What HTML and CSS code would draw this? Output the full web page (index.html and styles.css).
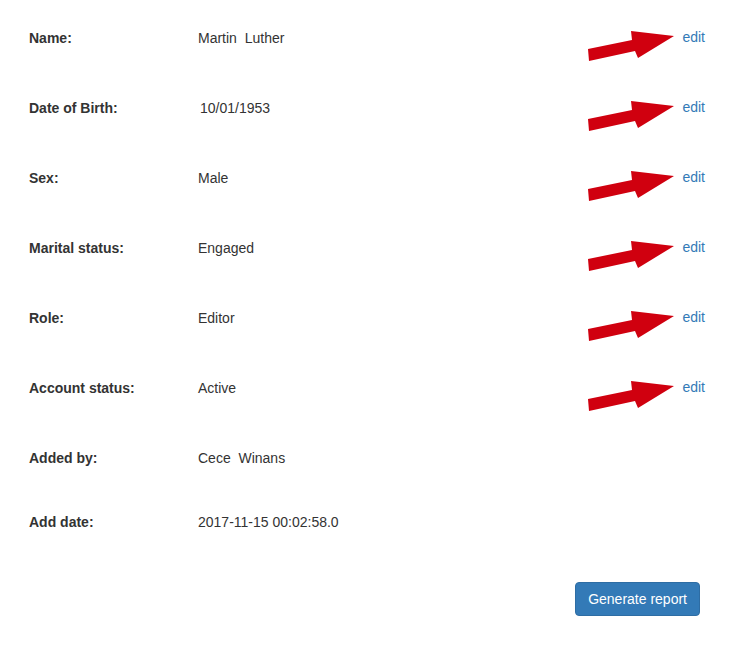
FILE: index.html
```html
<!DOCTYPE html>
<html>
<head>
<meta charset="utf-8">
<link rel="stylesheet" href="styles.css">
</head>
<body>
<div class="profile">
  <div class="row">
    <div class="label">Name:</div>
    <div class="value">Martin&nbsp; Luther</div>
    <a class="edit" href="#">edit</a>
    <svg class="arrow" viewBox="0 0 90 34" width="90" height="34"><polygon points="2,20 46,11 45,2 88,7 52,29 49,22 3,32"/></svg>
  </div>
  <div class="row">
    <div class="label">Date of Birth:</div>
    <div class="value dob">10/01/1953</div>
    <a class="edit" href="#">edit</a>
    <svg class="arrow" viewBox="0 0 90 34" width="90" height="34"><polygon points="2,20 46,11 45,2 88,7 52,29 49,22 3,32"/></svg>
  </div>
  <div class="row">
    <div class="label">Sex:</div>
    <div class="value">Male</div>
    <a class="edit" href="#">edit</a>
    <svg class="arrow" viewBox="0 0 90 34" width="90" height="34"><polygon points="2,20 46,11 45,2 88,7 52,29 49,22 3,32"/></svg>
  </div>
  <div class="row">
    <div class="label">Marital status:</div>
    <div class="value">Engaged</div>
    <a class="edit" href="#">edit</a>
    <svg class="arrow" viewBox="0 0 90 34" width="90" height="34"><polygon points="2,20 46,11 45,2 88,7 52,29 49,22 3,32"/></svg>
  </div>
  <div class="row">
    <div class="label">Role:</div>
    <div class="value">Editor</div>
    <a class="edit" href="#">edit</a>
    <svg class="arrow" viewBox="0 0 90 34" width="90" height="34"><polygon points="2,20 46,11 45,2 88,7 52,29 49,22 3,32"/></svg>
  </div>
  <div class="row">
    <div class="label">Account status:</div>
    <div class="value">Active</div>
    <a class="edit" href="#">edit</a>
    <svg class="arrow" viewBox="0 0 90 34" width="90" height="34"><polygon points="2,20 46,11 45,2 88,7 52,29 49,22 3,32"/></svg>
  </div>
  <div class="row short">
    <div class="label">Added by:</div>
    <div class="value">Cece&nbsp; Winans</div>
  </div>
  <div class="row last">
    <div class="label">Add date:</div>
    <div class="value">2017-11-15 00:02:58.0</div>
  </div>
  <div class="actions">
    <button class="btn" type="button">Generate report</button>
  </div>
</div>
</body>
</html>
```

FILE: styles.css
```css
html, body {
  margin: 0;
  padding: 0;
  background: #fff;
}
body {
  font-family: "Liberation Sans", Arial, sans-serif;
  font-size: 14px;
  line-height: 20px;
  color: #333;
}
.profile {
  padding-top: 28px;
  width: 733px;
}
.row {
  position: relative;
  display: grid;
  grid-template-columns: 169px 1fr auto;
  align-items: start;
  padding: 0 28px 0 29px;
  height: 70px;
}
.row.short {
  height: 64px;
}
.row.last {
  height: 20px;
}
.label {
  font-weight: bold;
}
.value {
  white-space: nowrap;
}
.dob {
  padding-left: 2px;
}
.edit {
  color: #337ab7;
  text-decoration: none;
  transform: translateY(-1px);
}
.arrow {
  position: absolute;
  left: 586px;
  top: 1px;
  fill: #d0000f;
}
.actions {
  display: flex;
  justify-content: flex-end;
  padding: 50px 33px 0 0;
}
.btn {
  font-family: "Liberation Sans", Arial, sans-serif;
  font-size: 14px;
  line-height: 20px;
  color: #fff;
  background: #337ab7;
  border: 1px solid #2e6da4;
  border-radius: 4px;
  padding: 6px 12px;
  height: 34px;
  cursor: pointer;
}
```
